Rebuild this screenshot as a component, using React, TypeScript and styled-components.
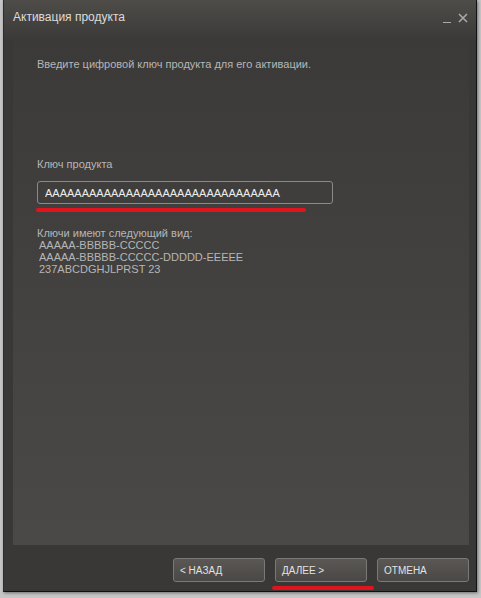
import React from "react";
import styled, { createGlobalStyle } from "styled-components";

const GlobalStyle = createGlobalStyle`
  html, body {
    margin: 0;
    padding: 0;
    background: #c6c6c6;
    font-family: "Liberation Sans", Arial, sans-serif;
  }
`;

const KEY = "A".repeat(32);

function App() {
  return (
    <>
      <GlobalStyle />
      <Page>
        <Window>
          <TitleBar>
            <Title>Активация продукта</Title>
            <Controls>
              <Minimize />
              <CloseIcon width="10" height="10" viewBox="0 0 10 10">
                <path d="M1 1 L9 9 M9 1 L1 9" stroke="#a9a9a9" strokeWidth="1.6" />
              </CloseIcon>
            </Controls>
          </TitleBar>
          <Panel>
            <Intro>Введите цифровой ключ продукта для его активации.</Intro>
            <Label>Ключ продукта</Label>
            <KeyField>
              <KeyInput value={KEY} readOnly />
              <Underline $width={270} $shift={-1} />
            </KeyField>
            <Hint>
              <div>Ключи имеют следующий вид:</div>
              <Example>AAAAA-BBBBB-CCCCC</Example>
              <Example>AAAAA-BBBBB-CCCCC-DDDDD-EEEEE</Example>
              <Example>237ABCDGHJLPRST 23</Example>
            </Hint>
          </Panel>
          <Footer>
            <ButtonSlot>
              <Button>&lt; НАЗАД</Button>
            </ButtonSlot>
            <ButtonSlot>
              <Button>ДАЛЕЕ &gt;</Button>
              <Underline $width={102} $shift={-3} />
            </ButtonSlot>
            <ButtonSlot>
              <Button>ОТМЕНА</Button>
            </ButtonSlot>
          </Footer>
        </Window>
      </Page>
    </>
  );
}

export default App;

const Page = styled.div`
  width: 481px;
  height: 598px;
  padding-left: 3px;
  box-sizing: border-box;
`;

const Window = styled.div`
  width: 474px;
  height: 592px;
  box-sizing: border-box;
  border-left: 1px solid #2f2e2d;
  border-right: 1px solid #111214;
  border-bottom: 1px solid #101114;
  background: #393836;
  box-shadow: 1px 1px 3px rgba(0, 0, 0, 0.45);
  display: flex;
  flex-direction: column;
`;

const TitleBar = styled.div`
  height: 40px;
  flex: none;
  display: flex;
  align-items: flex-start;
  justify-content: space-between;
  padding: 10px 8px 0 9px;
  box-sizing: border-box;
  background: linear-gradient(#4f4c49, #3b3a38);
`;

const Title = styled.div`
  font-size: 12px;
  color: #dcdcdc;
`;

const Controls = styled.div`
  display: flex;
  align-items: flex-start;
  gap: 7px;
  padding-top: 3px;
`;

const Minimize = styled.div`
  width: 8px;
  height: 1px;
  margin-top: 9px;
  background: #a9a9a9;
`;

const CloseIcon = styled.svg`
  display: block;
`;

const Panel = styled.div`
  height: 505px;
  margin: 0 7px 0 9px;
  padding: 18px 24px 0;
  box-sizing: border-box;
  background: linear-gradient(#3b3a38, #4a4947);
  font-size: 11px;
  color: #b6b6b6;
`;

const Intro = styled.div`
  line-height: 13px;
`;

const Label = styled.div`
  margin-top: 87px;
  line-height: 13px;
`;

const KeyField = styled.div`
  margin-top: 10px;
  width: 296px;
`;

const KeyInput = styled.input`
  display: block;
  width: 296px;
  height: 23px;
  box-sizing: border-box;
  border: 1px solid #8c8a88;
  border-radius: 3px;
  background: #3f3e3c;
  color: #ececec;
  font-family: "Liberation Sans", Arial, sans-serif;
  font-size: 11px;
  padding: 0 7px;
  outline: none;
`;

const Underline = styled.div<{ $width: number; $shift: number }>`
  width: ${(p) => p.$width}px;
  height: 4px;
  margin-top: 4px;
  margin-left: ${(p) => p.$shift}px;
  border-radius: 2px;
  background: #e0141c;
`;

const Hint = styled.div`
  margin-top: 15px;
  line-height: 12px;
`;

const Example = styled.div`
  padding-left: 2px;
`;

const Footer = styled.div`
  flex: 1;
  display: flex;
  justify-content: flex-end;
  gap: 10px;
  padding: 13px 7px 0 0;
  box-sizing: border-box;
  background: #393836;
`;

const ButtonSlot = styled.div`
  width: 92px;
  display: flex;
  flex-direction: column;
  align-items: flex-start;
`;

const Button = styled.button`
  width: 92px;
  height: 24px;
  box-sizing: border-box;
  border: 1px solid #7b7977;
  border-radius: 3px;
  background: linear-gradient(#5a5754, #4a4846);
  color: #e2e2e2;
  font-family: "Liberation Sans", Arial, sans-serif;
  font-size: 10px;
  text-align: left;
  padding: 0 6px;
  cursor: pointer;
`;
